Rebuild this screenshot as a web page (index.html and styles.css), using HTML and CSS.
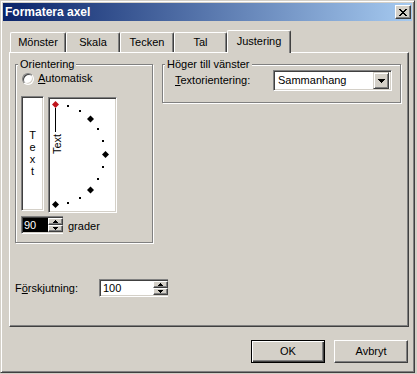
FILE: index.html
```
<!DOCTYPE html>
<html>
<head>
	<meta charset="utf-8">
	<title>Formatera axel</title>
	<link rel="stylesheet" href="styles.css">
</head>
<body>
<div class="window">
	<div class="titlebar">
		<span class="title">Formatera axel</span>
		<span class="close"><svg width="8" height="7" viewBox="0 0 8 7"><path d="M0 0h2v1H0zM6 0h2v1H6zM1 1h2v1H1zM5 1h2v1H5zM2 2h4v1H2zM3 3h2v1H3zM2 4h4v1H2zM1 5h2v1H1zM5 5h2v1H5zM0 6h2v1H0zM6 6h2v1H6z"/></svg></span>
	</div>
	<div class="main">
		<div class="tabs">
			<div class="tab t-monster">Mönster</div>
			<div class="tab t-skala">Skala</div>
			<div class="tab t-tecken">Tecken</div>
			<div class="tab t-tal">Tal</div>
			<div class="tab t-just active">Justering</div>
		</div>
		<div class="panel">
			<div class="top-row">
				<fieldset class="group orient">
					<legend>Orientering</legend>
					<div class="group-body">
						<label class="radio"><span class="radio-dot"></span><span><u>A</u>utomatisk</span></label>
						<div class="orient-boxes">
							<div class="vbox"><span>T</span><span>e</span><span>x</span><span>t</span></div>
							<div class="dial">
								<svg width="67" height="114" viewBox="49 98 67 114">
									<g fill="#000">
										<rect x="67" y="105" width="2" height="2"/>
										<rect x="79" y="110" width="2" height="2"/>
										<rect x="97" y="128" width="2" height="2"/>
										<rect x="102" y="140" width="2" height="2"/>
										<rect x="102" y="166" width="2" height="2"/>
										<rect x="97" y="178" width="2" height="2"/>
										<rect x="79" y="197" width="2" height="2"/>
										<rect x="67" y="202" width="2" height="2"/>
										<polygon points="90.5,115.5 94,119 90.5,122.5 87,119"/>
										<polygon points="105.5,151 109,154.5 105.5,158 102,154.5"/>
										<polygon points="90.5,186.5 94,190 90.5,193.5 87,190"/>
										<polygon points="55.5,201 59,204.5 55.5,208 52,204.5"/>
										<rect x="55" y="108" width="1" height="24"/>
										<text transform="translate(61 154) rotate(-90)" font-size="11">Text</text>
									</g>
									<polygon fill="#c0141c" points="55.5,101 59,104.5 55.5,108 52,104.5"/>
								</svg>
							</div>
						</div>
						<div class="degrees">
							<div class="spin spin-deg">
								<span class="val sel">90</span>
								<span class="spin-btns">
									<span class="spin-btn"><svg width="5" height="3" viewBox="0 0 5 3"><path d="M2 0h1v1H2zM1 1h3v1H1zM0 2h5v1H0z"/></svg></span>
									<span class="spin-btn"><svg width="5" height="3" viewBox="0 0 5 3"><path d="M0 0h5v1H0zM1 1h3v1H1zM2 2h1v1H2z"/></svg></span>
								</span>
							</div>
							<span>grader</span>
						</div>
					</div>
				</fieldset>
				<fieldset class="group rtl">
					<legend>Höger till vänster</legend>
					<div class="group-body">
						<div class="field-row">
							<label><u>T</u>extorientering:</label>
							<div class="combo">
								<span class="combo-text">Sammanhang</span>
								<span class="drop"><svg width="7" height="4" viewBox="0 0 7 4"><path d="M0 0h7v1H0zM1 1h5v1H1zM2 2h3v1H2zM3 3h1v1H3z"/></svg></span>
							</div>
						</div>
					</div>
				</fieldset>
			</div>
			<div class="offset-row">
				<label>F<u>ö</u>rskjutning:</label>
				<div class="spin spin-off">
					<span class="val">100</span>
					<span class="spin-btns">
						<span class="spin-btn"><svg width="5" height="3" viewBox="0 0 5 3"><path d="M2 0h1v1H2zM1 1h3v1H1zM0 2h5v1H0z"/></svg></span>
						<span class="spin-btn"><svg width="5" height="3" viewBox="0 0 5 3"><path d="M0 0h5v1H0zM1 1h3v1H1zM2 2h1v1H2z"/></svg></span>
					</span>
				</div>
			</div>
		</div>
		<div class="buttons">
			<button class="btn default">OK</button>
			<button class="btn">Avbryt</button>
		</div>
	</div>
</div>
</body>
</html>
```
FILE: styles.css
```
body{margin:0;background:#d4d0c8;color:#000;font:11px/13px "Liberation Sans",Arial,sans-serif;}
.window{width:415px;height:373px;box-sizing:border-box;border:1px solid;border-color:#d4d0c8 #404040 #404040 #d4d0c8;box-shadow:inset 1px 1px #fff,inset -1px -1px #808080;padding:2px;}

/* title bar */
.titlebar{height:18px;display:flex;align-items:center;justify-content:space-between;padding:0 1px 0 2px;background:linear-gradient(to right,#0a246a,#a6caf0);color:#fff;font-weight:bold;font-size:12px;}
.close{width:16px;height:14px;box-sizing:border-box;background:#d4d0c8;border:1px solid;border-color:#fff #404040 #404040 #fff;box-shadow:inset -1px -1px #808080;display:flex;align-items:center;justify-content:center;}
.close svg{display:block;}

.main{padding-left:6px;}

/* tabs */
.tabs{display:flex;align-items:flex-end;height:22px;margin:9px 0 0 1px;}
.tab{height:20px;box-sizing:border-box;border:1px solid;border-bottom:0;border-color:#fff #404040 #fff #fff;box-shadow:inset -1px 0 #808080;border-radius:2px 2px 0 0;text-align:center;padding-top:3px;}
.tab.active{height:23px;margin-bottom:-1px;padding-top:4px;position:relative;z-index:1;background:#d4d0c8;}
.t-monster{width:56px;}
.t-skala{width:54px;}
.t-tecken{width:54px;}
.t-tal{width:53px;}
.t-just{width:64px;}

.panel{width:400px;height:275px;box-sizing:border-box;border:1px solid;border-color:#fff #404040 #404040 #fff;box-shadow:inset -1px -1px #808080;padding:5px 0 0 5px;}
.top-row{display:flex;align-items:flex-start;gap:9px;}

/* group boxes */
.group{margin:0;padding:0;min-width:0;box-sizing:border-box;border:1px solid #808080;box-shadow:inset 1px 1px #fff,1px 1px #fff;}
.group legend{padding:0 2px;margin-left:2px;line-height:13px;background:#d4d0c8;}
.orient{width:138px;}
.orient .group-body{padding:1px 0 8px 5px;}
.rtl{width:239px;}
.rtl .group-body{padding:0 0 11px 12px;}

.radio{display:flex;align-items:center;gap:4px;height:13px;margin-left:1px;}
.radio-dot{width:12px;height:12px;box-sizing:border-box;border-radius:50%;background:#fff;border:1px solid;border-color:#808080 #fff #fff #808080;box-shadow:inset 1px 1px #404040,inset -1px -1px #d4d0c8;}

.sunken{box-sizing:border-box;}
.vbox,.dial,.spin,.combo{box-sizing:border-box;background:#fff;border:1px solid;border-color:#808080 #fff #fff #808080;box-shadow:inset 1px 1px #404040,inset -1px -1px #d4d0c8;}
.orient-boxes{display:flex;align-items:flex-start;gap:4px;margin-top:11px;}
.vbox{width:23px;height:115px;display:flex;flex-direction:column;align-items:center;justify-content:center;line-height:12px;padding-bottom:2px;}
.dial{width:69px;height:116px;margin-top:1px;}
.dial svg{display:block;}

/* spin boxes */
.degrees{display:flex;align-items:center;gap:5px;margin-top:3px;}
.degrees > span{padding-top:3px;}
.spin{display:flex;height:18px;padding:1px 0 1px 1px;border-right:0;}
.spin .val{flex:1;line-height:14px;padding-left:1px;}
.spin .val.sel{background:#000;color:#fff;}
.spin-btns{width:15px;display:flex;flex-direction:column;}
.spin-btn{flex:1;box-sizing:border-box;background:#d4d0c8;border:1px solid;border-color:#fff #404040 #404040 #fff;box-shadow:inset -1px -1px #808080;display:flex;align-items:center;justify-content:center;}
.spin-btn svg{display:block;}
.spin-deg{width:42px;}
.spin-off{width:69px;}
.spin-off .val{padding-left:2px;}

/* combo */
.field-row{display:flex;align-items:center;margin-top:-1px;}
.field-row label{width:98px;}
.combo{width:119px;height:21px;display:flex;align-items:center;padding:2px;}
.combo-text{padding-left:2px;}
.drop{width:16px;height:17px;margin-left:auto;box-sizing:border-box;background:#d4d0c8;border:1px solid;border-color:#d4d0c8 #404040 #404040 #d4d0c8;box-shadow:inset 1px 1px #fff,inset -1px -1px #808080;display:flex;align-items:center;justify-content:center;}
.drop svg{display:block;}

.offset-row{display:flex;align-items:center;margin-top:36px;}
.offset-row label{width:84px;}

/* dialog buttons */
.buttons{display:flex;justify-content:flex-end;gap:9px;margin-top:13px;padding-right:4px;}
.btn{width:74px;height:23px;box-sizing:border-box;padding:0;margin:0;font:inherit;color:#000;background:#d4d0c8;border:1px solid;border-color:#fff #404040 #404040 #fff;box-shadow:inset -1px -1px #808080;}
.btn.default{border-color:#000;box-shadow:inset 1px 1px #fff,inset -1px -1px #404040,inset -2px -2px #808080;}
```
